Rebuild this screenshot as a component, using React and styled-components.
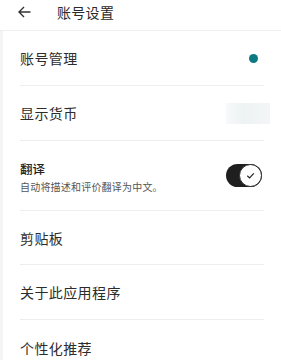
import React from "react";
import styled, { createGlobalStyle } from "styled-components";

const Global = createGlobalStyle`
  html, body {
    margin: 0;
    padding: 0;
    background: #ffffff;
  }
  body {
    font-family: "Noto Sans", "Noto Sans CJK SC", sans-serif;
    color: #222222;
  }
  * {
    box-sizing: border-box;
  }
`;

const Page = styled.div`
  width: 281px;
  height: 360px;
  overflow: hidden;
  background: #ffffff;
`;

const Header = styled.div`
  height: 31px;
  display: flex;
  align-items: center;
  padding: 0 0 6px 18px;
  border-bottom: 1px solid #efefef;
`;

const BackButton = styled.div`
  width: 13px;
  height: 12px;
  display: flex;
  align-items: center;
  margin-right: 26px;
`;

const Title = styled.div`
  font-size: 14px;
  color: #2a2a2a;
  letter-spacing: 0.3px;
`;

const Body = styled.div`
  border-left: 3px solid #f4f4f4;
  padding: 0 17px 0 17px;
`;

const Row = styled.div`
  height: ${(p) => p.h || 55}px;
  display: flex;
  align-items: center;
  justify-content: space-between;
  border-bottom: ${(p) => (p.last ? "none" : "1px solid #eeeeee")};
`;

const Label = styled.div`
  font-size: 14px;
  color: #2c2c2c;
  letter-spacing: 0.4px;
`;

const TextBlock = styled.div`
  display: flex;
  flex-direction: column;
  gap: 1px;
  margin-top: 1px;
`;

const Strong = styled.div`
  font-size: 12.5px;
  font-weight: 500;
  color: #222222;
`;

const Sub = styled.div`
  font-size: 10px;
  color: #555555;
  letter-spacing: 0.2px;
`;

const Dot = styled.div`
  width: 9px;
  height: 9px;
  border-radius: 50%;
  background: #0b7a83;
  margin-right: 6px;
`;

const Placeholder = styled.div`
  width: 44px;
  height: 21px;
  background: linear-gradient(90deg, #f7fafa, #edf2f2 40%, #f3f6f6);
  margin-right: -6px;
`;

const Toggle = styled.div`
  width: 36px;
  height: 23px;
  border-radius: 12px;
  background: #1f1f1f;
  position: relative;
  margin-right: 2px;
`;

const Knob = styled.div`
  position: absolute;
  right: 0;
  top: 0;
  width: 23px;
  height: 23px;
  border-radius: 50%;
  background: #ffffff;
  border: 1px solid #2a2a2a;
  display: flex;
  align-items: center;
  justify-content: center;
`;

export default function App() {
  return (
    <Page>
      <Global />
      <Header>
        <BackButton>
          <svg width="13" height="12" viewBox="0 0 13 12" fill="none">
            <path d="M12.5 6H1.2M6 1L1 6l5 5" stroke="#333" strokeWidth="1.4" />
          </svg>
        </BackButton>
        <Title>账号设置</Title>
      </Header>
      <Body>
        <Row h={55}>
          <Label>账号管理</Label>
          <Dot />
        </Row>
        <Row h={55}>
          <Label>显示货币</Label>
          <Placeholder />
        </Row>
        <Row h={70}>
          <TextBlock>
            <Strong>翻译</Strong>
            <Sub>自动将描述和评价翻译为中文。</Sub>
          </TextBlock>
          <Toggle>
            <Knob>
              <svg width="11" height="11" viewBox="0 0 12 12" fill="none">
                <path d="M2.5 6.3L5 8.6 9.6 3.6" stroke="#222" strokeWidth="1.3" />
              </svg>
            </Knob>
          </Toggle>
        </Row>
        <Row h={54}>
          <Label>剪贴板</Label>
        </Row>
        <Row h={55}>
          <Label>关于此应用程序</Label>
        </Row>
        <Row h={55} last>
          <Label>个性化推荐</Label>
        </Row>
      </Body>
    </Page>
  );
}
